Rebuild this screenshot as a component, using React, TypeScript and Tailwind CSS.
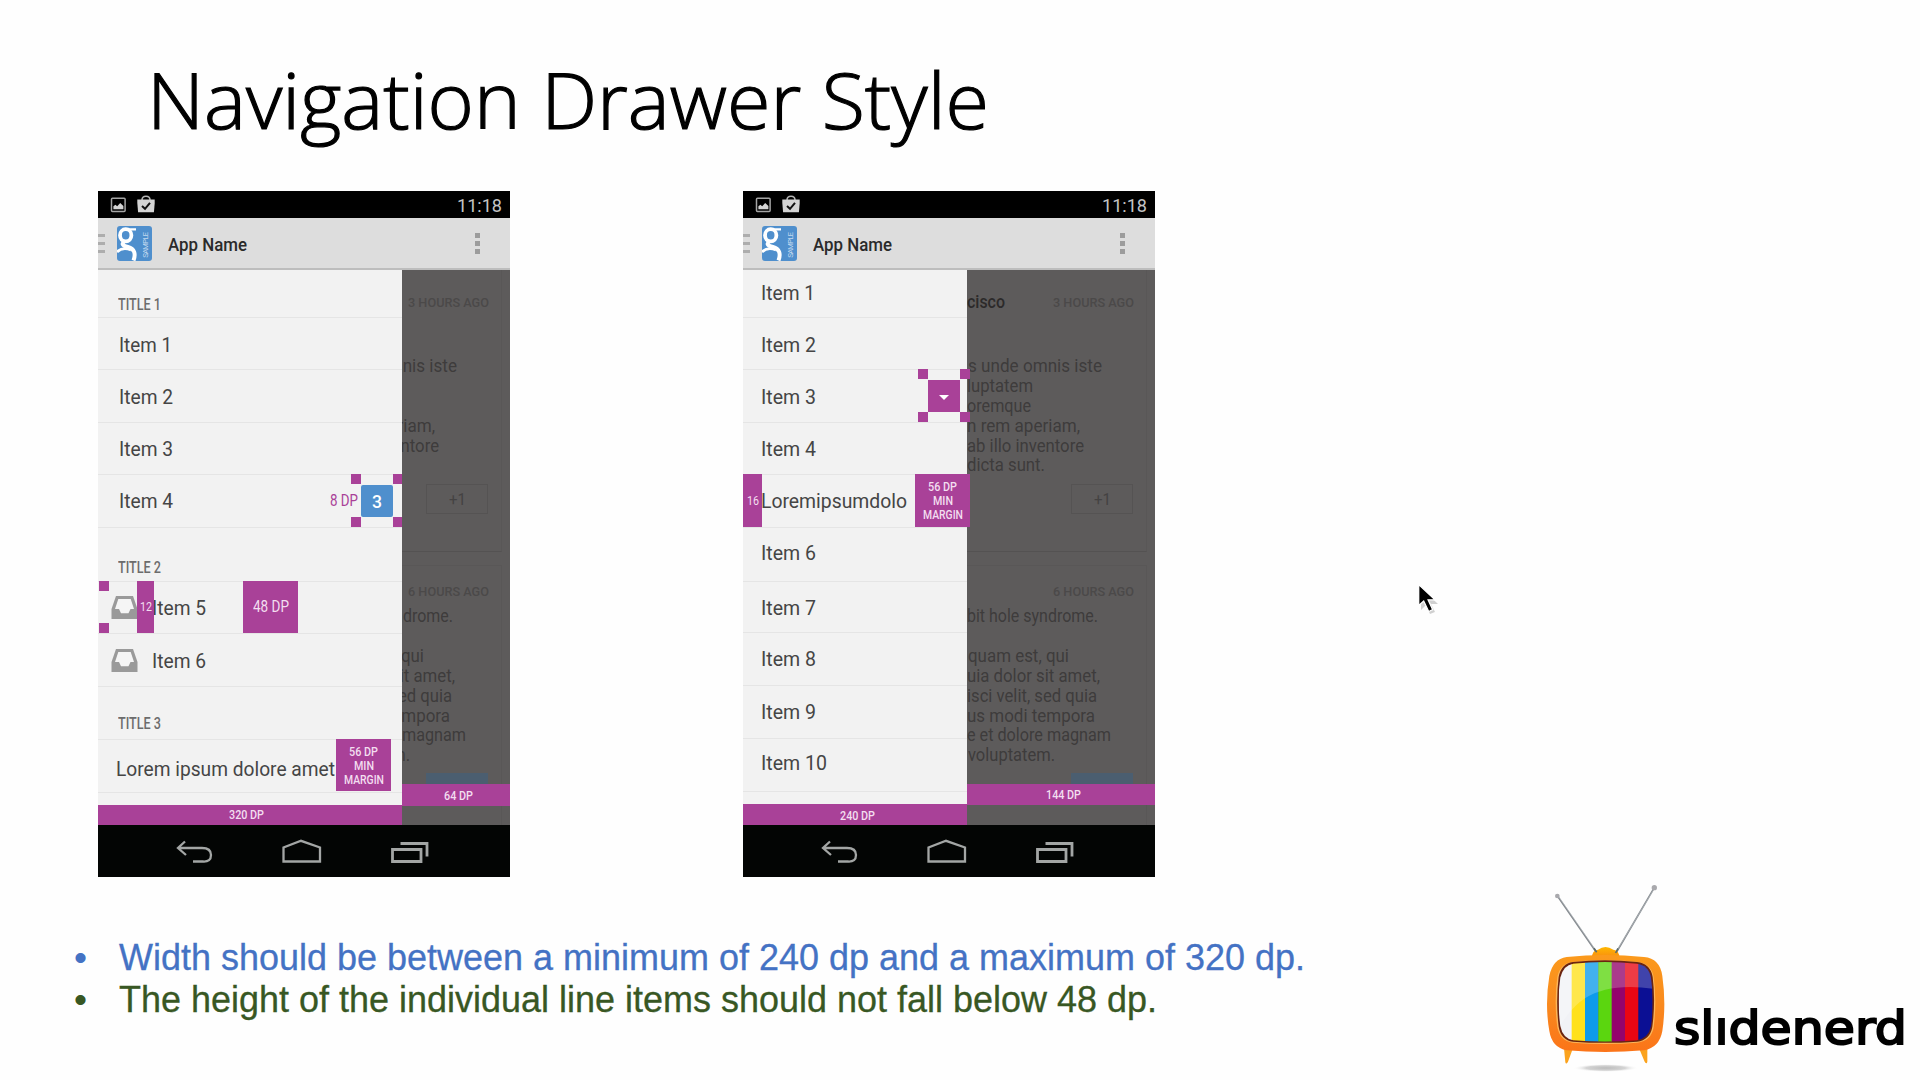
import { useLayoutEffect, useRef, useState } from "react";
import type { ReactNode } from "react";

/* Single line of text condensed or stretched horizontally to an exact width. */
function Fit({ w, className = "", children }: { w: number; className?: string; children: ReactNode }) {
  const ref = useRef<HTMLSpanElement>(null);
  const [scale, setScale] = useState(1);
  useLayoutEffect(() => {
    if (ref.current && ref.current.offsetWidth > 0) setScale((w / ref.current.getBoundingClientRect().width) * scale);
  }, [w]);
  return (
    <span className={"block shrink-0 whitespace-nowrap leading-none " + className} style={{ width: w }}>
      <span ref={ref} className="inline-block origin-left" style={{ transform: `scaleX(${scale})` }}>
        {children}
      </span>
    </span>
  );
}

function StatusBar() {
  return (
    <div className="flex h-[27px] items-center bg-black pr-2 pl-3">
      <svg className="mt-px h-[16px] w-[17px]" viewBox="0 0 17 16">
        <rect x="1.5" y="1.2" width="13.6" height="13.2" rx="1" fill="none" stroke="#a5a5a5" strokeWidth="1.5" />
        <path d="M3.4 12.3V9.3l2-1.6 1.8 1.6 3-3.3 3.2 3v3.3z" fill="#d5d5d5" />
      </svg>
      <svg className="mb-px ml-[9px] h-[18px] w-5" viewBox="0 0 20 18">
        <path d="M6 5C6 0 14 0 14 5" fill="none" stroke="#b5b5b5" strokeWidth="1.5" />
        <path d="M1.3 4.6h17.4v4l-.8 8.7H2.1L1.3 8z" fill="#d4d4d4" />
        <path d="M6 11l3 2.8 5-6" fill="none" stroke="#111" strokeWidth="2" />
      </svg>
      <div className="ml-auto pt-px">
        <Fit w={45} className="text-[19px] text-[#c4c4c4]">11:18</Fit>
      </div>
    </div>
  );
}

function ActionBar() {
  return (
    <div className="flex h-[52px] items-center border-b-2 border-[#bdbdbd] bg-[#dddddd]">
      <div className="flex w-[7px] flex-col gap-[5px]">
        <i className="h-[3px] bg-[#adadad]" />
        <i className="h-[3px] bg-[#adadad]" />
        <i className="h-[3px] bg-[#adadad]" />
      </div>
      <div className="relative mt-px ml-3 h-[35px] w-[35px] overflow-hidden rounded-[3px] bg-[#4f8fcd]">
        <svg className="h-full w-full" viewBox="0 0 35 35">
          <g fill="none" stroke="#fff">
            <ellipse cx="8.7" cy="9.3" rx="5.7" ry="6.1" strokeWidth="3.8" />
            <path d="M9 3.3H19" strokeWidth="2.2" />
            <path d="M8 14.5C3.5 18 6 20 11 21c6.500 1.500 8 7 5.500 13.500" strokeWidth="4" />
            <path d="M0 26C4 22 9 22 14 24" strokeWidth="2.800" />
          </g>
        </svg>
        <div className="absolute top-[7px] right-[2px] rotate-180 text-[8px] leading-none tracking-[-1px] text-[#c2d9ef] [writing-mode:vertical-rl]">
          SAMPLE
        </div>
      </div>
      <div className="ml-4 pt-[2px]">
        <Fit w={79} className="text-[19px] font-medium text-[#2a2a2a]">App Name</Fit>
      </div>
      <div className="mt-px mr-[30px] ml-auto flex flex-col gap-[3px]">
        <i className="h-[5px] w-[5px] bg-[#9c9c9c]" />
        <i className="h-[5px] w-[5px] bg-[#9c9c9c]" />
        <i className="h-[5px] w-[5px] bg-[#9c9c9c]" />
      </div>
    </div>
  );
}

function NavBar() {
  return (
    <div className="h-[52px] bg-[#030504]">
      <svg className="h-full w-full" viewBox="0 0 412 52" fill="none" stroke="#a3a6a5">
        <path d="M87 16.500l-7 6.500 8 7M81 23h23q9 0 9 7t-8 6.500h-10" strokeWidth="2.300" />
        <path d="M185.500 36.500V22.500l17.500-6.700L222 22.500v14z" strokeWidth="2.300" />
        <path d="M294.500 24.500h28.500v12h-28.500z" strokeWidth="2.800" />
        <path d="M302.500 18.500h26.500v13" strokeWidth="2.800" />
      </svg>
    </div>
  );
}

function Inbox() {
  return (
    <svg className="-mt-px h-[23px] w-[27px]" viewBox="0 0 27 23">
      <path d="M5 0h17l4.500 13v10H.5V13z" fill="#9a9a9a" />
      <path d="M7.300 3h12.400l3.300 10h-3.500l-2 4.300H10L8 13H4z" fill="#f5f5f5" />
    </svg>
  );
}

/* Four corner squares that mark an 8 dp inset. */
function Handles({ className, children }: { className: string; children?: ReactNode }) {
  return (
    <div className={"absolute flex items-center justify-center " + className}>
      <i className="absolute top-0 left-0 h-[10px] w-[10px] bg-[#a94198]" />
      <i className="absolute top-0 right-0 h-[10px] w-[10px] bg-[#a94198]" />
      <i className="absolute bottom-0 left-0 h-[10px] w-[10px] bg-[#a94198]" />
      <i className="absolute right-0 bottom-0 h-[10px] w-[10px] bg-[#a94198]" />
      {children}
    </div>
  );
}

function MinMargin({ className }: { className: string }) {
  return (
    <div className={"absolute flex w-[55px] flex-col items-center gap-[2px] bg-[#a94198] pt-[7px] text-[12px] font-medium text-[#f3def0] " + className}>
      <Fit w={29}>56 DP</Fit>
      <Fit w={20}>MIN</Fit>
      <Fit w={40}>MARGIN</Fit>
    </div>
  );
}

function Row({ className, children }: { className: string; children?: ReactNode }) {
  return <div className={"relative flex shrink-0 items-center text-[20px] text-[#454545] " + className}>{children}</div>;
}

const LINE = "border-t border-[#e5e5e5] ";

function Title({ children }: { children: ReactNode }) {
  return <Fit w={43} className="text-[16px] font-medium text-[#6c6c6c]">{children}</Fit>;
}

function Para({ w, pr, children }: { w: number; pr: string; children: ReactNode }) {
  return (
    <div className={"flex h-[19.9px] items-center justify-end " + pr}>
      <Fit w={w} className="text-[18px]">{children}</Fit>
    </div>
  );
}

/* Feed that lies, dimmed, behind the drawer; anchored right and cut by the drawer's edge. */
function Feed({ className, bar }: { className: string; bar: ReactNode }) {
  return (
    <div className={"relative flex h-[555px] justify-end overflow-hidden bg-[#5d5b5b] text-[#3e3c3c] " + className}>
      <div className="flex w-[188px] shrink-0 flex-col">
        <div className="mr-2 h-[282px] border-r border-b border-r-[#595757] border-b-[#545252]">
          <div className="flex h-[64px] items-center justify-between pr-3">
            <Fit w={38} className="text-[18px] font-medium text-[#2c2a2a]">cisco</Fit>
            <Fit w={81} className="text-[13px] font-medium text-[#4b4949]">3 HOURS AGO</Fit>
          </div>
          <div className="mt-[22px] -mr-[8px]">
            <Para w={134} pr="pr-[52px]">s unde omnis iste</Para>
            <Para w={66} pr="pr-[121px]">luptatem</Para>
            <Para w={64} pr="pr-[123px]">oremque</Para>
            <Para w={113} pr="pr-[74px]">n rem aperiam,</Para>
            <Para w={117} pr="pr-[70px]">ab illo inventore</Para>
            <Para w={78} pr="pr-[109px]">dicta sunt.</Para>
          </div>
          <div className="mt-[9px] mr-[13px] ml-auto flex h-[30px] w-[62px] items-center justify-center border border-[#555353] pt-px">
            <Fit w={17} className="text-[16px] text-[#444242]">+1</Fit>
          </div>
        </div>
        <div className="mt-[13px] mr-2 h-[260px] border-t border-r border-[#595757]">
          <div className="flex h-[51px] items-center justify-end pr-3">
            <Fit w={81} className="text-[13px] font-medium text-[#4b4949]">6 HOURS AGO</Fit>
          </div>
          <div className="-mt-[11px] -mr-[8px]">
            <Para w={131} pr="pr-[56px]">bit hole syndrome.</Para>
          </div>
          <div className="mt-[20px] -mr-[8px]">
            <Para w={101} pr="pr-[85px]">quam est, qui</Para>
            <Para w={133} pr="pr-[54px]">uia dolor sit amet,</Para>
            <Para w={130} pr="pr-[57px]">isci velit, sed quia</Para>
            <Para w={128} pr="pr-[59px]">us modi tempora</Para>
            <Para w={144} pr="pr-[43px]">e et dolore magnam</Para>
            <Para w={87} pr="pr-[99px]">voluptatem.</Para>
          </div>
          <div className="mt-[8px] mr-[13px] ml-auto h-[30px] w-[62px] bg-[#4b5e70]" />
        </div>
      </div>
      {bar}
    </div>
  );
}

function Phone({ children }: { children: ReactNode }) {
  return (
    <div className="flex h-[686px] w-[412px] shrink-0 flex-col font-[Roboto,sans-serif]">
      <StatusBar />
      <ActionBar />
      <div className="flex h-[555px]">{children}</div>
      <NavBar />
    </div>
  );
}

function WidePhone() {
  return (
    <Phone>
      <div className="relative flex w-[304px] flex-col overflow-hidden bg-[#f2f2f2]">
        <Row className="h-[47px] pt-[23px] pl-5"><Title>TITLE 1</Title></Row>
        <Row className={LINE + "h-[52px] pt-[2px] pl-[21px]"}><Fit w={53}>Item 1</Fit></Row>
        <Row className={LINE + "h-[53px] pt-[2px] pl-[21px]"}><Fit w={54}>Item 2</Fit></Row>
        <Row className={LINE + "h-[52px] pt-px pl-[21px]"}><Fit w={54}>Item 3</Fit></Row>
        <Row className={LINE + "h-[53px] pb-px pl-[21px]"}>
          <Fit w={54}>Item 4</Fit>
          <Fit w={28} className="mr-[44px] ml-auto text-[16px] text-[#a94198]">8 DP</Fit>
          <Handles className="-top-px -right-px h-[53px] w-[52px]">
            <div className="flex h-8 w-8 items-center justify-center rounded-[2px] bg-[#4f8fcd] pt-[2px]">
              <Fit w={10} className="text-[18px] font-medium text-white">3</Fit>
            </div>
          </Handles>
        </Row>
        <Row className={LINE + "h-[54px] pt-[26px] pl-5"}><Title>TITLE 2</Title></Row>
        <Row className={LINE + "h-[52px] pt-px pl-[13px]"}>
          <Inbox />
          <Fit w={54} className="ml-[14px]">Item 5</Fit>
          <Handles className="-top-px -left-[41px] h-[52px] w-[52px]" />
          <div className="absolute -top-px left-[39px] flex h-[52px] w-[17px] items-center justify-center bg-[#a94198]">
            <Fit w={12} className="text-[12px] text-[#f3def0]">12</Fit>
          </div>
          <div className="absolute -top-px left-[145px] flex h-[52px] w-[55px] items-center justify-center bg-[#a94198]">
            <Fit w={36} className="text-[16px] text-[#f3def0]">48 DP</Fit>
          </div>
        </Row>
        <Row className={LINE + "h-[53px] pt-px pl-[13px]"}>
          <Inbox />
          <Fit w={54} className="ml-[14px]">Item 6</Fit>
        </Row>
        <Row className={LINE + "h-[53px] pt-[22px] pl-5"}><Title>TITLE 3</Title></Row>
        <Row className={LINE + "h-[53px] pt-[5px] pl-[18px]"}>
          <Fit w={219}>Lorem ipsum dolore amet</Fit>
          <MinMargin className="-top-px left-[238px] h-[52px]" />
        </Row>
        <Row className={LINE + "h-[13px]"} />
        <div className="flex h-5 items-center bg-[#a94198] pl-[131px]">
          <Fit w={35} className="text-[12px] font-medium text-[#f3def0]">320 DP</Fit>
        </div>
      </div>
      <Feed
        className="w-[108px]"
        bar={
          <div className="absolute top-[514px] left-0 flex h-[22px] w-full items-center bg-[#a94198] pt-px pl-[42px]">
            <Fit w={29} className="text-[12px] font-medium text-[#f3def0]">64 DP</Fit>
          </div>
        }
      />
    </Phone>
  );
}

function NarrowPhone() {
  return (
    <Phone>
      <div className="relative z-10 flex w-[224px] flex-col bg-[#f2f2f2]">
        <Row className="h-[47px] pb-px pl-[18px]"><Fit w={54}>Item 1</Fit></Row>
        <Row className={LINE + "h-[52px] pt-[2px] pl-[18px]"}><Fit w={55}>Item 2</Fit></Row>
        <Row className={LINE + "h-[53px] pt-[2px] pl-[18px]"}>
          <Fit w={55}>Item 3</Fit>
          <Handles className="-top-px -right-[3px] h-[53px] w-[52px]">
            <div className="flex h-8 w-8 items-center justify-center bg-[#a94198] pt-[3px]">
              <svg className="h-[5px] w-[10px]" viewBox="0 0 10 5"><path d="M0 0h10L5 5z" fill="#fff" /></svg>
            </div>
          </Handles>
        </Row>
        <Row className={LINE + "h-[52px] pt-px pl-[18px]"}><Fit w={55}>Item 4</Fit></Row>
        <Row className={LINE + "h-[53px] pb-px pl-[18px]"}>
          <div className="absolute -top-px left-0 flex h-[53px] w-[19px] items-center justify-center bg-[#a94198]">
            <Fit w={12} className="text-[12px] text-[#f3def0]">16</Fit>
          </div>
          <Fit w={146} className="relative">Loremipsumdolo</Fit>
          <MinMargin className="-top-px -right-[3px] h-[53px]" />
        </Row>
        <Row className={LINE + "h-[54px] pb-1 pl-[18px]"}><Fit w={55}>Item 6</Fit></Row>
        <Row className={LINE + "h-[51px] pt-px pl-[18px]"}><Fit w={55}>Item 7</Fit></Row>
        <Row className={LINE + "h-[53px] pl-[18px]"}><Fit w={55}>Item 8</Fit></Row>
        <Row className={LINE + "h-[53px] pb-px pl-[18px]"}><Fit w={55}>Item 9</Fit></Row>
        <Row className={LINE + "h-[53px] pb-[4px] pl-[18px]"}><Fit w={66}>Item 10</Fit></Row>
        <Row className={LINE + "h-[13px]"} />
        <div className="flex h-[21px] items-center bg-[#a94198] pt-[3px] pl-[97px]">
          <Fit w={35} className="text-[12px] font-medium text-[#f3def0]">240 DP</Fit>
        </div>
      </div>
      <Feed
        className="w-[188px]"
        bar={
          <div className="absolute top-[514px] left-0 flex h-[21px] w-full items-center bg-[#a94198] pl-[79px]">
            <Fit w={35} className="text-[12px] font-medium text-[#f3def0]">144 DP</Fit>
          </div>
        }
      />
    </Phone>
  );
}

function Television() {
  return (
    <svg className="h-[200px] w-[130px] shrink-0" viewBox="60 48 390 600">
      <defs>
        <linearGradient id="case" x1="0" y1="0" x2="0" y2="1">
          <stop offset="0" stopColor="#fb9a1c" />
          <stop offset="0.5" stopColor="#f98a1e" />
          <stop offset="1" stopColor="#fb7419" />
        </linearGradient>
        <linearGradient id="knob" x1="0" y1="0" x2="0" y2="1">
          <stop offset="0" stopColor="#ffb800" />
          <stop offset="1" stopColor="#f88c10" />
        </linearGradient>
        <radialGradient id="shade">
          <stop offset="0" stopColor="#bbb" />
          <stop offset="0.6" stopColor="#d4d4d4" />
          <stop offset="1" stopColor="#fff" stopOpacity="0" />
        </radialGradient>
        <clipPath id="screen">
          <path d="M160 308Q255 298 350 308Q386 312 393 350Q403 420 393 495Q386 532 350 538Q255 546 160 538Q128 532 121 495Q111 420 121 350Q130 312 160 308Z" />
        </clipPath>
      </defs>
      <ellipse cx="257" cy="621" rx="98" ry="12" fill="url(#shade)" />
      <path d="M112 104L228 272M403 80L288 276" stroke="#868b90" strokeWidth="5" />
      <path d="M114 104L226 266M402 84L290 270" stroke="#c3c9cc" strokeWidth="1.5" />
      <circle cx="112" cy="105" r="7" fill="#a9a9ad" />
      <circle cx="403" cy="80" r="8" fill="#a9a9ad" />
      <path d="M216 290Q216 268 234 266Q256 250 280 266Q298 268 298 290Z" fill="url(#knob)" />
      <path d="M222 262L230 274M294 262L287 276" stroke="#5c6b6b" strokeWidth="5" />
      <path d="M132 562L136 604Q138 612 144 602L158 564ZM358 564L374 602Q380 612 382 602L382 562Z" fill="#fba31d" />
      <path d="M140 288Q255 276 372 288Q420 292 427 345Q439 430 427 510Q418 560 372 568Q255 578 140 568Q96 560 88 510Q74 430 88 345Q98 294 140 288Z" fill="url(#case)" />
      <path d="M158 303Q255 291 352 303Q394 307 401 348Q411 420 401 499Q394 540 352 545Q255 553 158 545Q120 540 112 499Q102 420 112 348Q120 307 158 303Z" fill="#fbb65a" />
      <path d="M159 303Q255 293 351 303Q391 307 398 348Q407 420 397 497Q390 537 351 542Q255 549 159 542Q123 537 116 497Q107 420 116 348Q124 307 159 303Z" fill="#6b2410" />
      <g clipPath="url(#screen)">
        <path d="M105 295h51v255h-51z" fill="#f1f2f6" />
        <path d="M155 295h41v255h-41z" fill="#ffe11a" />
        <path d="M195 295h41v255h-41z" fill="#0d9bea" />
        <path d="M235 295h41v255h-41z" fill="#5bd60f" />
        <path d="M275 295h41v255h-41z" fill="#94046c" />
        <path d="M315 295h41v255h-41z" fill="#ea0613" />
        <path d="M355 295h51v255h-51z" fill="#0b0f94" />
        <path d="M105 295h301v89Q270 364 195 412Q150 440 105 520Z" fill="#fff" opacity="0.22" />
      </g>
    </svg>
  );
}

function Cursor() {
  return (
    <svg className="absolute top-[583px] left-[1417px] h-[34px] w-[24px]" viewBox="0 0 24 34">
      <path d="M4 5v22l5-5 4 9 5-2-4-8h7z" fill="#000" opacity="0.18" />
      <path d="M1.700 1.500V22.500l5-4.500 5 10.500 4-1.800-4.600-9.900H18z" fill="#000" stroke="#fff" strokeWidth="1.3" />
    </svg>
  );
}

export default function App() {
  return (
    <main className="relative flex h-[1080px] w-[1920px] flex-col overflow-hidden bg-[#fefefe]">
      <header className="flex h-[191px] shrink-0 items-start pt-[61px] pl-[147px]">
        <h1 className="font-['Open_Sans',sans-serif] font-light text-black">
          <Fit w={842} className="text-[77px] [-webkit-text-stroke:1.2px_black]">Navigation Drawer Style</Fit>
        </h1>
      </header>
      <section className="flex gap-[233px] pl-[98px]">
        <WidePhone />
        <NarrowPhone />
      </section>
      <footer className="flex h-[203px] justify-between">
        <ul className="flex flex-col gap-[6px] pt-[63px] pl-[74px] font-['Liberation_Sans',sans-serif] text-[36px]">
          <li className="flex text-[#4472c4]">
            <Fit w={13} className="mr-[32px]">•</Fit>
            <Fit w={1186} className="[-webkit-text-stroke:0.3px_#4472c4]">Width should be between a minimum of 240 dp and a maximum of 320 dp.</Fit>
          </li>
          <li className="flex text-[#385723]">
            <Fit w={13} className="mr-[32px]">•</Fit>
            <Fit w={1038} className="[-webkit-text-stroke:0.3px_#385723]">The height of the individual line items should not fall below 48 dp.</Fit>
          </li>
        </ul>
        <div className="flex pr-[13px]">
          <Television />
          <div className="pt-[127px] pl-[4px] font-['DejaVu_Sans',sans-serif]">
            <Fit w={233} className="text-[47px] text-black [-webkit-text-stroke:2px_black]">slıdenerd</Fit>
          </div>
        </div>
      </footer>
      <Cursor />
    </main>
  );
}
